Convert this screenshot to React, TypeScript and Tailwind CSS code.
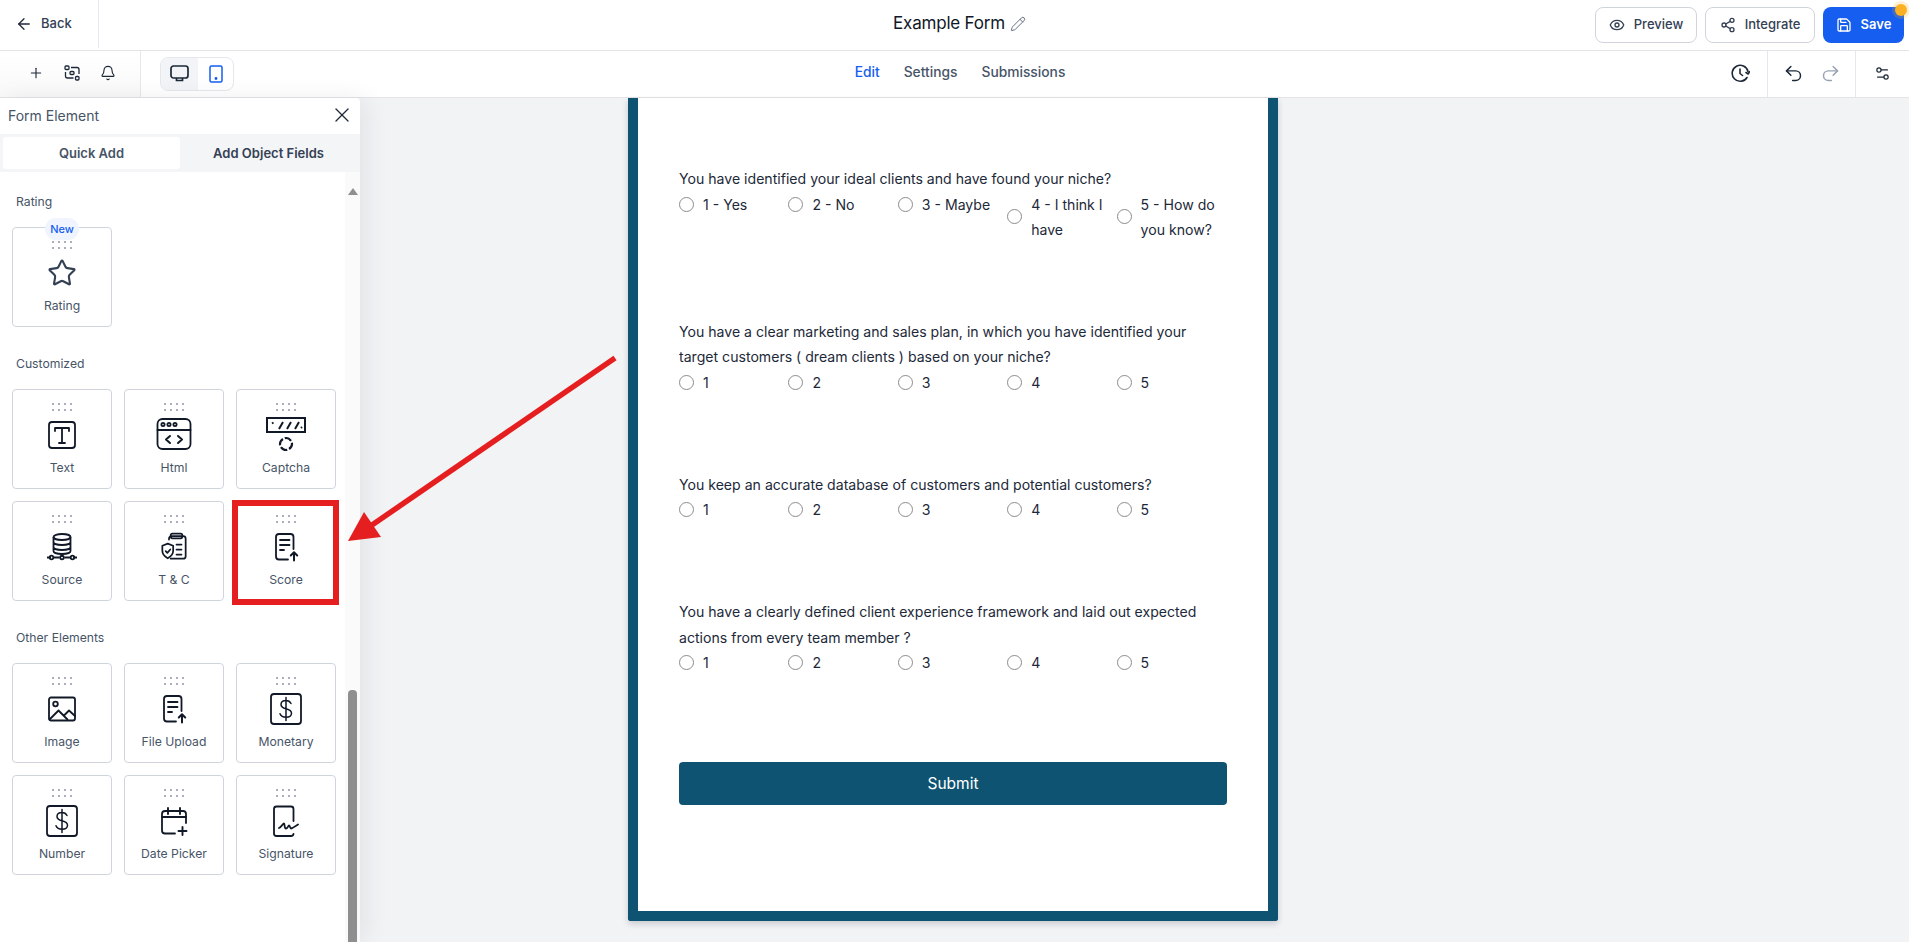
import { ReactNode } from "react";
import { ArrowLeft, Bell, Eye, Plus, Redo2, Save, Settings2, Share2, Star, Undo2, X, Pencil } from "lucide-react";

const FONT = "font-['Inter','Noto_Sans',sans-serif]";

function Icon({ children, size = 36, stroke = 1.8 }: { children: ReactNode; size?: number; stroke?: number }) {
    return (
        <svg width={size} height={size} viewBox="0 0 36 36" fill="none" stroke="#111827" strokeWidth={stroke} strokeLinecap="round" strokeLinejoin="round">
            {children}
        </svg>
    );
}

const UploadDoc = () => (
    <Icon>
        <path d="M20 30.500H11a3 3 0 0 1-3-3V8a3 3 0 0 1 3-3h11.500a3 3 0 0 1 3 3v12" />
        <path d="M12 11h9.500M12 16h9.500M12 21h4" />
        <path d="M26 31.500v-8M22.800 26.500l3.200-3.200 3.200 3.200" strokeWidth="2" />
    </Icon>
);

const Dollar = () => (
    <Icon>
        <rect x="3" y="3" width="30" height="30" rx="3" />
        <path d="M23 12.500c-1-2-3-3-5-3-3 0-5 1.600-5 4s2 3.500 5 4.300 5.500 1.800 5.500 4.500-2.500 4-5.500 4-5-1-6-3.500M18 6.500v23" strokeWidth="1.500" />
    </Icon>
);

const icons: Record<string, ReactNode> = {
    Text: (
        <Icon>
            <rect x="5" y="5" width="26" height="26" rx="3" />
            <path d="M11 14v-3h14v3M18 11v15M15 26h6" />
        </Icon>
    ),
    Html: (
        <Icon>
            <rect x="1.500" y="2" width="33" height="30" rx="5" />
            <path d="M1.500 13h33" />
            <circle cx="7" cy="7.500" r="1.600" />
            <circle cx="13" cy="7.500" r="1.600" />
            <circle cx="19" cy="7.500" r="1.600" />
            <path d="M14 19l-4 3.500 4 3.500M22 19l4 3.500-4 3.500" strokeWidth="2" />
        </Icon>
    ),
    Captcha: (
        <svg width="40" height="36" viewBox="0 0 40 36" fill="none" stroke="#111827" strokeWidth="2">
            <rect x="1" y="1" width="38" height="14" />
            <path d="M6 6.500l1.500-1M13 12l4-7M21 12l4-7M29 12l4-7M35 11l1-1" />
            <path d="M14 27c0-3 3-6 6-6M20 21c3 0 6 3 6 6M26 27c0 3-3 6-6 6M20 33c-3 0-6-3-6-6" strokeDasharray="6 2" strokeWidth="2.200" />
        </svg>
    ),
    Source: (
        <svg width="32" height="28" viewBox="0 0 32 28" fill="none" stroke="#111827" strokeWidth="1.800">
            <ellipse cx="16" cy="4" rx="8.500" ry="3" />
            <path d="M7.500 4v14c0 1.700 3.800 3 8.500 3s8.500-1.300 8.500-3V4M7.500 9c0 1.700 3.800 3 8.500 3s8.500-1.300 8.500-3M7.500 14c0 1.700 3.800 3 8.500 3s8.500-1.300 8.500-3" />
            <path d="M16 21v3M1 24.500h4M7.500 24.500h6M18.500 24.500h6M27 24.500h4" />
            <circle cx="5.500" cy="24.500" r="1.800" />
            <circle cx="16" cy="24.500" r="1.800" />
            <circle cx="26.500" cy="24.500" r="1.800" />
        </svg>
    ),
    "T & C": (
        <Icon size={30} stroke={2.100}>
            <path d="M12 9V8a3 3 0 0 1 3-3h14a3 3 0 0 1 3 3v21a3 3 0 0 1-3 3H14" />
            <rect x="14" y="2" width="14" height="5.500" rx="2" />
            <path d="M10.500 14l6.500 2.500v6c0 4.500-3 7-6.500 9-3.500-2-6.500-4.500-6.500-9v-6z" />
            <path d="M8 23l2 2 3.500-4M21 15h6M21 21h6M21 27h6" />
        </Icon>
    ),
    Score: <UploadDoc />,
    Image: (
        <Icon>
            <rect x="5" y="6.500" width="26" height="23" rx="2" />
            <circle cx="11.500" cy="13" r="2.300" />
            <path d="M5.500 28.500l9-9 9 9M20 24.500l5-5 6 5.500" />
        </Icon>
    ),
    "File Upload": <UploadDoc />,
    Monetary: <Dollar />,
    Number: <Dollar />,
    "Date Picker": (
        <Icon>
            <path d="M19 30.500H9a3 3 0 0 1-3-3V11a3 3 0 0 1 3-3h18a3 3 0 0 1 3 3v9" />
            <path d="M6 14h24M12 5v6M24 5v6M26.500 24v8M22.500 28h8" strokeWidth="1.900" />
        </Icon>
    ),
    Signature: (
        <Icon>
            <path d="M25.500 18V6a2.500 2.500 0 0 0-2.500-2.500H8.500A2.500 2.500 0 0 0 6 6v24.500A2.500 2.500 0 0 0 8.500 33H23a2.500 2.500 0 0 0 2.500-2" />
            <path d="M11 25c2-1 4-4.500 5-4.500s0 5 2 5 2-3 3-3 1 3 2 3 4-2 7-4" />
        </Icon>
    ),
};

function Dots() {
    return (
        <div className="grid grid-cols-4 gap-x-[4px] gap-y-[4px] w-[20px]">
            {Array.from({ length: 8 }).map((_, i) => (
                <span key={i} className="w-[2px] h-[2px] bg-[#a9afbd]" />
            ))}
        </div>
    );
}

function Card({ name, badge }: { name: string; badge?: boolean }) {
    return (
        <div className="relative w-[100px] h-[100px] bg-white border border-[#d0d5dd] rounded-[4px] flex flex-col items-center pt-[13px]">
            {badge && (
                <span className="absolute top-[-10px] left-[32px] w-[34px] h-[22px] rounded-full bg-[#eff4ff] text-[#155eef] text-[11px] font-medium flex items-center justify-center">
                    New
                </span>
            )}
            <Dots />
            <div className="h-[36px] mt-[6px] flex items-center justify-center">
                {icons[name] ?? <Star className="w-[30px] h-[30px] text-[#344054]" strokeWidth={1.7} />}
            </div>
            <span className="mt-[7px] text-[12.200px] leading-[16px] text-[#475467]">{name}</span>
        </div>
    );
}

function Section({ title, names, className }: { title: string; names: string[]; className?: string }) {
    return (
        <div className={className}>
            <div className="pl-[16px] text-[12.200px] leading-[16px] text-[#475467]">{title}</div>
            <div className="mt-[17px] pl-[12px] grid grid-cols-[100px_100px_100px] gap-[12px]">
                {names.map((n) => (
                    <Card key={n} name={n} badge={n === "Rating"} />
                ))}
            </div>
        </div>
    );
}

function Radio({ label }: { label: ReactNode }) {
    return (
        <div className="w-[109.400px] flex items-center">
            <span className="w-[15px] h-[15px] rounded-full border border-[#8c8c8c] bg-white shrink-0" />
            <span className="ml-[9px] text-[14.100px] leading-[25px] text-[#1d2939] pr-[5px]">{label}</span>
        </div>
    );
}

function Question({ lines, options, className }: { lines: string[]; options: string[]; className?: string }) {
    return (
        <div className={className}>
            {lines.map((l) => (
                <div key={l} className="text-[14.100px] leading-[25.500px] text-[#1d2939]">{l}</div>
            ))}
            <div className="flex items-start">
                {options.map((o) => (
                    <Radio key={o} label={o} />
                ))}
            </div>
        </div>
    );
}

export default function App() {
    return (
        <div className={`relative w-[1909px] h-[942px] overflow-hidden bg-[#f2f3f5] ${FONT}`}>
            {/* top bar */}
            <header className="h-[51px] bg-white border-b border-[#e4e4e7] grid grid-cols-[1fr_auto_1fr] items-center">
                <div className="h-full flex items-center">
                    <div className="w-[99px] h-[48px] self-start border-r border-[#e4e7ec] flex items-center pl-[15px] gap-[8px] text-[13px] font-medium text-[#344054]">
                        <ArrowLeft className="w-[18px] h-[18px] text-[#1d2939]" strokeWidth={1.700} />
                        Back
                    </div>
                </div>
                <div className="ml-[10px] mb-[2px] flex items-center gap-[5px] text-[17px] tracking-[-0.2px] text-[#101828]">
                    Example Form
                    <Pencil className="w-[16px] h-[16px] text-[#667085]" strokeWidth={1.500} />
                </div>
                <div className="flex justify-end items-center gap-[8px] pr-[5px]">
                    <button className="h-[36px] w-[102px] rounded-[8px] border border-[#d0d5dd] flex items-center justify-center gap-[9px] text-[13px] font-medium text-[#344054]">
                        <Eye className="w-[16px] h-[16px]" /> Preview
                    </button>
                    <button className="h-[36px] w-[110px] rounded-[8px] border border-[#d0d5dd] flex items-center justify-center gap-[9px] text-[13px] font-medium text-[#344054]">
                        <Share2 className="w-[16px] h-[16px]" /> Integrate
                    </button>
                    <button className="relative h-[36px] w-[81px] rounded-[8px] bg-[#155eef] flex items-center justify-center gap-[9px] text-[13px] font-semibold text-white">
                        <Save className="w-[16px] h-[16px]" /> Save
                        <span className="absolute top-[-3px] right-[-3px] w-[12px] h-[12px] rounded-full bg-[#fdb022] ring-3 ring-[#fdb022]/20" />
                    </button>
                </div>
            </header>

            {/* tool bar */}
            <div className="h-[47px] bg-white border-b border-[#e4e4e7] grid grid-cols-[1fr_auto_1fr] items-center">
                <div className="h-full flex items-center">
                    <div className="w-[141px] h-full border-r border-[#e4e7ec] bg-gradient-to-b from-white to-[#f9f9f9] flex items-center pl-[28px] pb-[2px] gap-[20px] text-[#1d2939]">
                        <Plus className="w-[16px] h-[16px]" strokeWidth={1.700} />
                        <svg width="16" height="16" viewBox="0 0 16 16" fill="none" stroke="#1d2939" strokeWidth="1.300">
                            <rect x="1" y="1" width="4" height="3.500" rx="1" />
                            <rect x="6" y="6.500" width="4" height="3" rx="1" />
                            <rect x="11.500" y="11.500" width="3.500" height="3.500" rx="1" />
                            <path d="M7 2.500h6a2 2 0 0 1 2 2V9M1.500 7v4a2 2 0 0 0 2 2h6" />
                        </svg>
                        <Bell className="w-[16px] h-[16px]" strokeWidth={1.700} />
                    </div>
                    <div className="ml-[19px] mb-[1px] w-[74px] h-[34px] rounded-[8px] border border-[#e4e7ec] overflow-hidden flex">
                        <div className="w-[37px] bg-[#f2f4f7] flex items-center justify-center">
                            <svg width="19" height="17" viewBox="0 0 19 17" fill="none" stroke="#1d2939" strokeWidth="1.700">
                                <rect x="1" y="1" width="17" height="12" rx="2.500" />
                                <path d="M6.500 13v2.500h6V13" />
                            </svg>
                        </div>
                        <div className="flex-1 flex items-center justify-center">
                            <svg width="14" height="18" viewBox="0 0 14 18" fill="none" stroke="#155eef" strokeWidth="1.500">
                                <rect x="1" y="1" width="12" height="16" rx="1.500" />
                                <circle cx="7" cy="13.500" r="0.700" fill="#155eef" />
                            </svg>
                        </div>
                    </div>
                </div>
                <nav className="ml-[11px] mb-[4px] flex items-center gap-[24px] text-[13.800px] font-medium text-[#475467]">
                    <span className="text-[#155eef]">Edit</span>
                    <span>Settings</span>
                    <span>Submissions</span>
                </nav>
                <div className="h-full flex justify-end items-center">
                    <svg className="mr-[17px] mb-[2px]" width="19" height="19" viewBox="0 0 19 19" fill="none" stroke="#1d2939" strokeWidth="1.600" strokeLinecap="round" strokeLinejoin="round">
                        <path d="M17 7.500A8 8 0 1 0 16 13.500" />
                        <path d="M9 5v4.500l2.500 2M15 8.500l2.200 1.500 1.300-2.300" />
                    </svg>
                    <div className="h-full w-[89px] border-x border-[#e4e7ec] flex items-center justify-center gap-[16px] pb-[2px]">
                        <Undo2 className="w-[21px] h-[21px] text-[#1d2939]" strokeWidth={1.700} />
                        <Redo2 className="w-[21px] h-[21px] text-[#98a2b3]" strokeWidth={1.700} />
                    </div>
                    <div className="w-[53px] flex items-center justify-center pb-[2px]">
                        <Settings2 className="w-[17px] h-[17px] text-[#1d2939]" strokeWidth={1.700} />
                    </div>
                </div>
            </div>

            {/* canvas */}
            <main className="flex justify-center">
                <div className="ml-[-3px] w-[650px] h-[823px] bg-white border-x-[10px] border-b-[10px] border-[#0e5472] rounded-b-[3px] shadow-[0_3px_6px_rgba(16,24,40,0.18)] px-[41px] pt-[68px]">
                    <Question
                        lines={["You have identified your ideal clients and have found your niche?"]}
                        options={["1 - Yes", "2 - No", "3 - Maybe", "4 - I think I have", "5 - How do you know?"]}
                    />
                    <Question
                        className="mt-[77px]"
                        lines={["You have a clear marketing and sales plan, in which you have identified your", "target customers ( dream clients ) based on your niche?"]}
                        options={["1", "2", "3", "4", "5"]}
                    />
                    <Question
                        className="mt-[77px]"
                        lines={["You keep an accurate database of customers and potential customers?"]}
                        options={["1", "2", "3", "4", "5"]}
                    />
                    <Question
                        className="mt-[77px]"
                        lines={["You have a clearly defined client experience framework and laid out expected", "actions from every team member ?"]}
                        options={["1", "2", "3", "4", "5"]}
                    />
                    <button className="mt-[87px] w-[548px] h-[43px] rounded-[4px] bg-[#0e5472] text-white text-[15.500px]">Submit</button>
                </div>
            </main>

            {/* element panel */}
            <aside className="absolute left-0 top-[98px] w-[360px] h-[844px] bg-white rounded-tr-[4px] shadow-[6px_0_24px_rgba(16,24,40,0.07)] flex flex-col overflow-hidden">
                <div className="h-[36px] shrink-0 flex items-center justify-between pl-[8px] pr-[6px] pb-[2px] text-[14px] text-[#475467]">
                    Form Element
                    <X className="w-[24px] h-[24px] text-[#1d2939]" strokeWidth={1.300} />
                </div>
                <div className="h-[38px] shrink-0 bg-[#f4f5f7] p-[3px] flex text-[13px] font-semibold">
                    <div className="w-[177px] rounded-[3px] bg-white flex items-center justify-center text-[#475467] pt-[1px]">Quick Add</div>
                    <div className="flex-1 flex items-center justify-center text-[#344054] pt-[1px]">Add Object Fields</div>
                </div>
                <div className="flex-1 relative pt-[22px]">
                    <Section title="Rating" names={["Rating"]} />
                    <Section className="mt-[29px]" title="Customized" names={["Text", "Html", "Captcha", "Source", "T & C", "Score"]} />
                    <Section className="mt-[29px]" title="Other Elements" names={["Image", "File Upload", "Monetary", "Number", "Date Picker", "Signature"]} />
                    <div className="absolute right-0 top-0 bottom-0 w-[15px] bg-[#fafafa]">
                        <div className="mx-auto mt-[16px] w-0 h-0 border-x-[5px] border-x-transparent border-b-[7px] border-b-[#8f8f8f]" />
                        <div className="absolute left-[3px] top-[518px] bottom-0 w-[9px] rounded-t-[4px] bg-[#8f8f8f]" />
                    </div>
                </div>
            </aside>

            {/* red annotation */}
            <div className="absolute left-[232px] top-[500px] w-[107px] h-[105px] border-[6px] border-[#e51f1f]" />
            <svg className="absolute left-[340px] top-[350px]" width="290" height="210" viewBox="0 0 290 210" fill="none">
                <path d="M275 8L32 175" stroke="#e51f1f" strokeWidth="5.500" />
                <path d="M8 191L24 162L41 187Z" fill="#e51f1f" />
            </svg>
        </div>
    );
}
